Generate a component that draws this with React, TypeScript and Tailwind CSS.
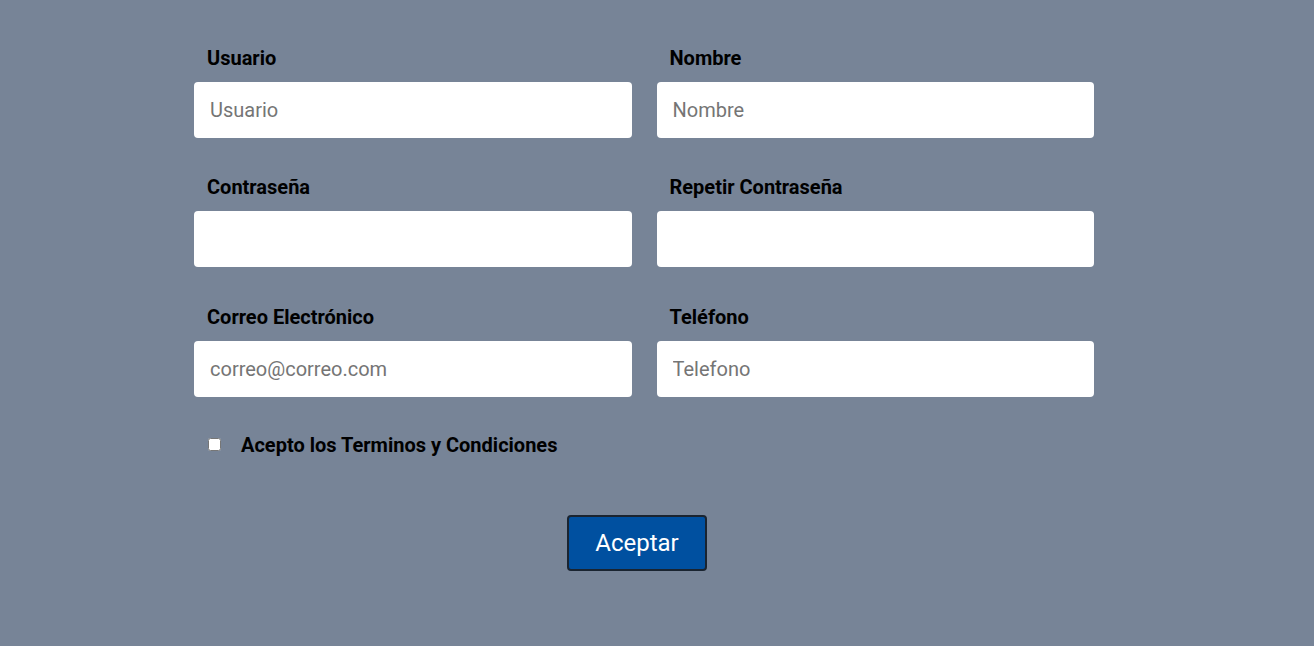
import { useState } from 'react'

interface FieldProps {
    label: string
    type?: string
    placeholder?: string
}

function Field({ label, type = 'text', placeholder }: FieldProps) {
    return (
        <div className="flex flex-col">
            <label className="pl-[13px] text-[20px] leading-[24px] font-bold text-black">{label}</label>
            <input
                type={type}
                placeholder={placeholder}
                className="mt-3 h-[56px] w-full rounded-[4px] bg-white px-4 text-[20px] text-black placeholder:text-[#757575] outline-none"
            />
        </div>
    )
}

export default function App() {
    const [accepted, setAccepted] = useState(false)

    return (
        <div className="min-h-[646px] bg-[#778497] pl-[194px] pr-[220px] pt-[46px] font-['Roboto',sans-serif]">
            <form className="flex flex-col" onSubmit={(e) => e.preventDefault()}>
                <div className="grid grid-cols-2 gap-x-[25px] gap-y-[37.4px]">
                    <Field label="Usuario" placeholder="Usuario" />
                    <Field label="Nombre" placeholder="Nombre" />
                    <Field label="Contraseña" type="password" />
                    <Field label="Repetir Contraseña" type="password" />
                    <Field label="Correo Electrónico" type="email" placeholder="correo@correo.com" />
                    <Field label="Teléfono" placeholder="Telefono" />
                </div>

                <label className="mt-[34px] flex h-[28px] items-center pl-[14px]">
                    <input
                        type="checkbox"
                        checked={accepted}
                        onChange={(e) => setAccepted(e.target.checked)}
                        className="m-0 h-[13px] w-[13px]"
                    />
                    <span className="ml-[20px] text-[20px] leading-[28px] font-bold text-black">Acepto los Terminos y Condiciones</span>
                </label>

                <div className="mt-[56px] flex justify-center">
                    <button
                        type="submit"
                        className="-ml-[14px] h-[56px] w-[140px] rounded-[4px] border-2 border-[#1a2430] bg-[#0050a0] text-[24px] text-white"
                    >
                        Aceptar
                    </button>
                </div>
            </form>
        </div>
    )
}
